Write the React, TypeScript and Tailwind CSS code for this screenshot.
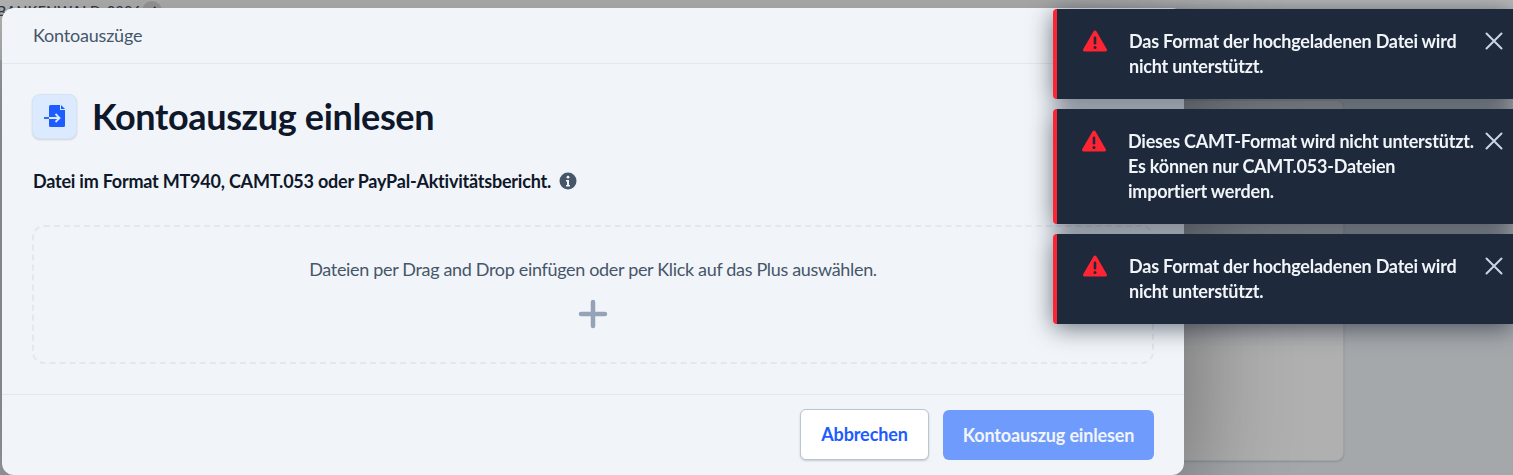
import React from "react";

function Warn() {
  return (
    <svg width="26" height="24" viewBox="0 0 26 24" className="shrink-0">
      <path d="M13 1.500c.6 0 1.100.3 1.400.8l10.400 18c.6 1-.1 2.200-1.300 2.200H2.500c-1.200 0-1.900-1.200-1.300-2.200l10.400-18c.3-.5.800-.8 1.400-.8z" fill="#ff2433" />
      <rect x="11.700" y="7.500" width="2.600" height="8" rx="1.200" fill="#1e293b" />
      <circle cx="13" cy="18.400" r="1.500" fill="#1e293b" />
    </svg>
  );
}

function X() {
  return (
    <svg width="18" height="18" viewBox="0 0 18 18" className="shrink-0">
      <path d="M1.500 1.500l15 15M16.500 1.500l-15 15" stroke="#cbd5e1" strokeWidth="2" strokeLinecap="round" />
    </svg>
  );
}

function Toast({ lines, h, iconLeft, textLeft }: { lines: string[]; h: string; iconLeft: string; textLeft: string }) {
  return (
    <div className={`relative flex w-[460px] ${h} rounded-l-[4px] border-l-[4px] border-[#ff2433] bg-[#1e293b]`}>
      <div className={`flex pt-[20px] ${iconLeft}`}>
        <Warn />
      </div>
      <div className={`pt-[20px] text-[18px] font-bold leading-[25px] tracking-[-0.22px] text-[#f1f5f9] ${textLeft}`}>
        {lines.map((l) => (
          <div key={l} className="whitespace-nowrap">{l}</div>
        ))}
      </div>
      <div className="absolute right-[10px] top-[23px]">
        <X />
      </div>
    </div>
  );
}

export default function App() {
  return (
    <div className="relative h-[475px] w-[1513px] overflow-hidden bg-[#a5a8ab] font-['Lato','Liberation_Sans',sans-serif]">
      <div className="absolute left-0 top-0 h-[60px] w-full bg-[#b8b8b8]" />
      <div className="absolute left-[-3px] top-[1px] flex items-center whitespace-nowrap text-[14px] font-semibold leading-[14px] tracking-[0.5px] text-[#333d4b]">
        <span className="w-[110px]">BANKENWALD</span>
        <span className="w-[35px]">0396</span>
        <span className="flex h-[20px] w-[20px] items-center justify-center rounded-full bg-[#a0a0a0]">
          <svg width="16" height="12" viewBox="0 0 16 12">
            <path d="M1 6h13M10 2l4 4-4 4" stroke="#333d4b" strokeWidth="1.800" fill="none" />
          </svg>
        </span>
      </div>
      <div className="absolute left-[1100px] top-[100px] h-[361px] w-[244px] rounded-[8px] border border-[#a0a2a5] bg-[#b0b0b0] shadow-[0_1px_2px_rgba(15,23,42,0.15)]" />

      <div className="absolute left-[2px] top-[8px] flex h-[467px] w-[1182px] flex-col rounded-[12px] bg-[#f1f5f9] text-[#0f172a] shadow-[0_30px_110px_rgba(0,0,0,0.42)]">
        <div className="flex h-[56px] shrink-0 items-center border-b border-[#e2e8f0] px-[31px] text-[18px] tracking-[-0.2px] text-[#475569]">
          Kontoauszüge
        </div>
        <div className="flex flex-1 flex-col px-[30px]">
          <div className="mt-[30px] flex items-center gap-[15px]">
            <div className="flex h-[45px] w-[45px] items-center justify-center rounded-[8px] border border-[#d5e3f5] bg-[#dbeafe] shadow-[0_1px_2px_rgba(15,23,42,0.15)]">
              <svg width="26" height="26" viewBox="0 0 26 26">
                <path d="M7 2.500A1.500 1.500 0 0 1 8.500 1h9.500v5h5v15.500a1.500 1.500 0 0 1-1.500 1.500h-13A1.500 1.500 0 0 1 7 21.500z" fill="#1d5cff" />
                <path d="M19 1l4 4h-4z" fill="#1d5cff" />
                <path d="M2 14h5" stroke="#1d5cff" strokeWidth="1.800" />
                <path d="M7 14h10.500M13.500 10l4 4-4 4" stroke="#dbeafe" strokeWidth="1.800" fill="none" />
              </svg>
            </div>
            <h1 className="text-[36px] font-bold leading-[45px] tracking-[-0.35px] text-[#0f172a]">Kontoauszug einlesen</h1>
          </div>
          <div className="mt-[29px] flex h-[26px] items-center gap-[8px] pl-[1px] text-[18px] font-bold tracking-[-0.22px] text-[#0f172a]">
            <span>Datei im Format MT940, CAMT.053 oder PayPal-Aktivitätsbericht.</span>
            <svg width="18" height="18" viewBox="0 0 18 18">
              <circle cx="9" cy="9" r="8.500" fill="#475569" />
              <circle cx="9" cy="5.200" r="1.400" fill="#f1f5f9" />
              <path d="M7 8h3v5h1v1.500H7V13h1V9.500H7z" fill="#f1f5f9" />
            </svg>
          </div>
          <div className="mt-[31px] flex h-[139px] w-[1122px] flex-col items-center rounded-[12px] border-2 border-dashed border-[#e2e8f0] pt-[30px]">
            <div className="text-[18px] leading-[24px] tracking-[-0.33px] text-[#475569]">
              Dateien per Drag and Drop einfügen oder per Klick auf das Plus auswählen.
            </div>
            <svg width="32" height="32" viewBox="0 0 32 32" className="mt-[17px]">
              <path d="M16 4v24M4 16h24" stroke="#94a3b8" strokeWidth="4.500" strokeLinecap="round" />
            </svg>
          </div>
        </div>
        <div className="flex h-[81px] shrink-0 items-start justify-end gap-[14px] border-t border-[#e2e8f0] pr-[30px] pt-[14px]">
          <button className="h-[51px] w-[129px] rounded-[6px] border border-[#bcc5d3] bg-white text-[18px] font-bold tracking-[-0.1px] text-[#1d5cff] shadow-[0_1px_2px_rgba(15,23,42,0.2)]">
            Abbrechen
          </button>
          <button className="mt-[1px] h-[50px] w-[211px] rounded-[6px] bg-[#6f9bfd] text-[18px] font-bold tracking-[-0.15px] text-[#f1f5f9]">
            Kontoauszug einlesen
          </button>
        </div>
      </div>

      <div className="absolute left-[1053px] top-[9px] flex flex-col gap-[10px] drop-shadow-[0_4px_12px_rgba(15,23,42,0.6)]">
        <Toast h="h-[90px]" iconLeft="pl-[25px]" textLeft="pl-[21px]" lines={["Das Format der hochgeladenen Datei wird", "nicht unterstützt."]} />
        <Toast h="h-[115px]" iconLeft="pl-[24px]" textLeft="pl-[21px]" lines={["Dieses CAMT-Format wird nicht unterstützt.", "Es können nur CAMT.053-Dateien", "importiert werden."]} />
        <Toast h="h-[90px]" iconLeft="pl-[25px]" textLeft="pl-[21px]" lines={["Das Format der hochgeladenen Datei wird", "nicht unterstützt."]} />
      </div>
    </div>
  );
}
